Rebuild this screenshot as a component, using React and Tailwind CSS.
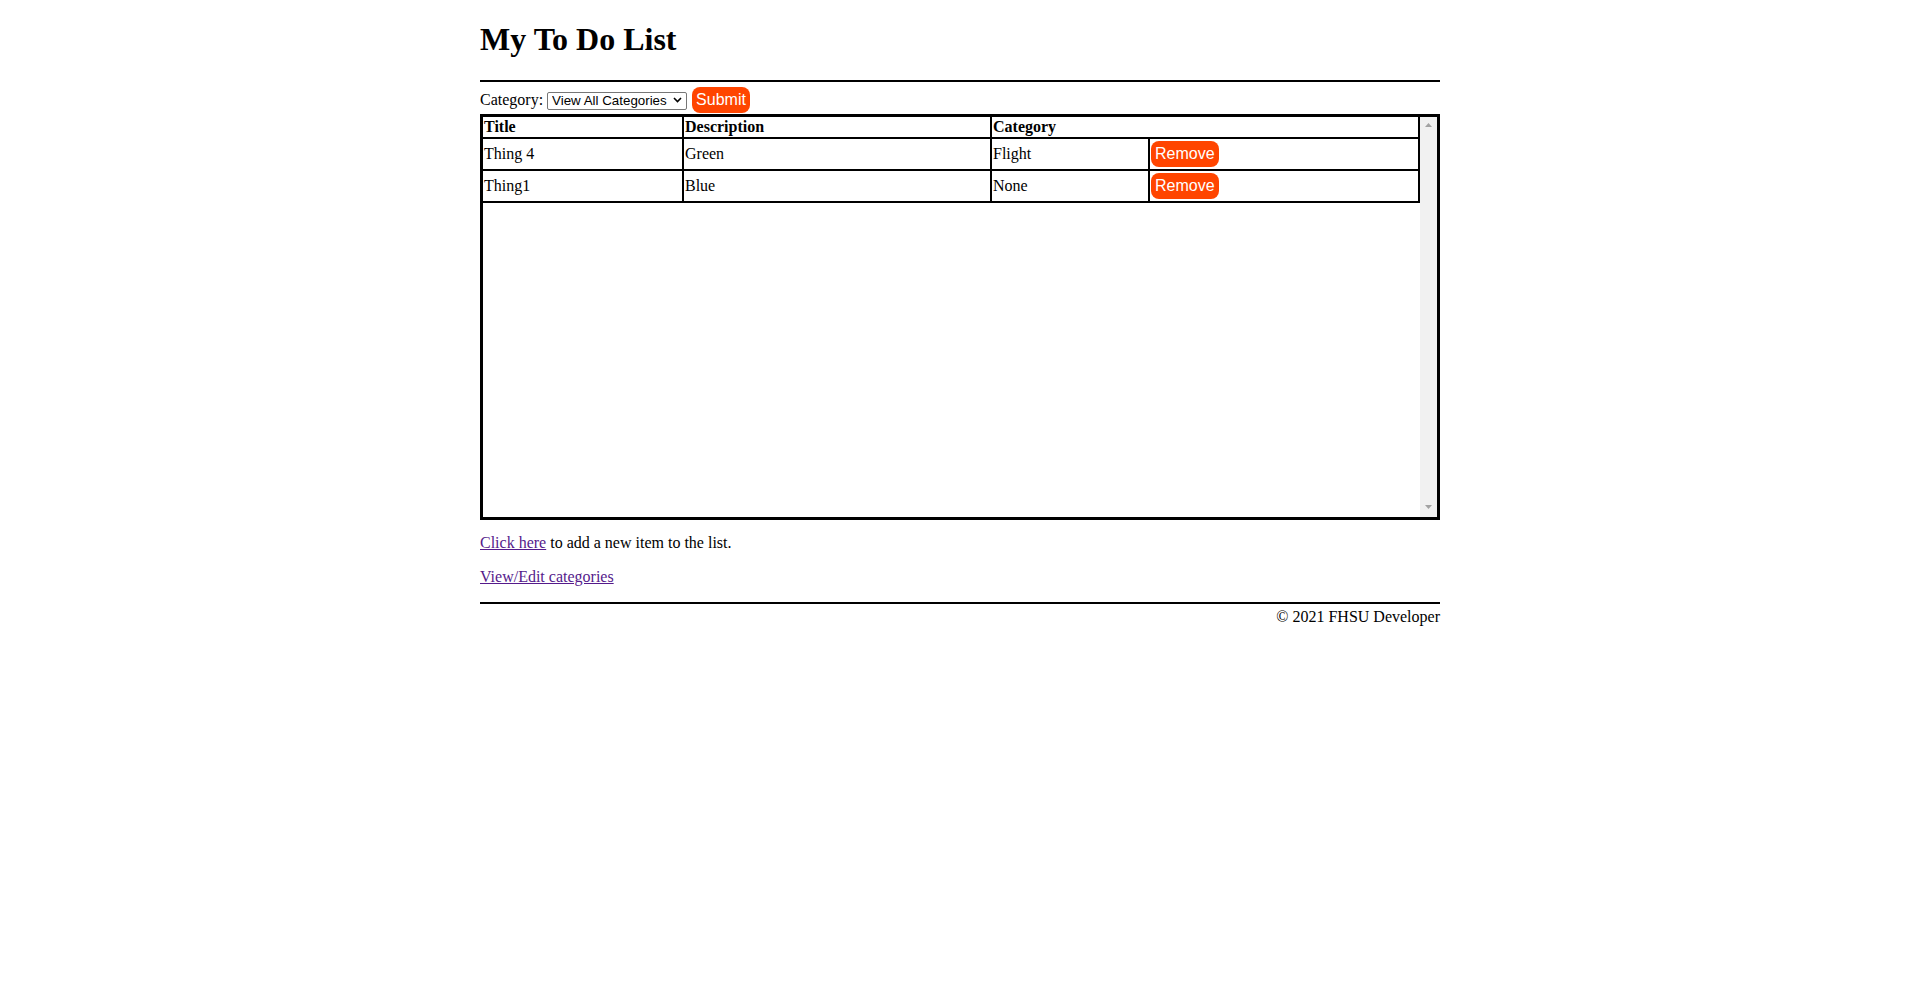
import React, { useState } from 'react';

const initialItems = [
  { id: 4, title: 'Thing 4', description: 'Green', category: 'Flight' },
  { id: 1, title: 'Thing1', description: 'Blue', category: 'None' },
];

function Chevron() {
  return (
    <svg width="9" height="6" viewBox="0 0 9 6" className="pointer-events-none absolute right-[5px] top-[6px]">
      <path d="M1 1l3.5 3.5L8 1" fill="none" stroke="#000" strokeWidth="1.6" />
    </svg>
  );
}

export default function App() {
  const [items, setItems] = useState(initialItems);
  const [category, setCategory] = useState('all');

  const handleRemove = (id) => {
    setItems((prev) => prev.filter((item) => item.id !== id));
  };

  return (
    <div className="min-h-screen bg-white text-black font-['Liberation_Serif','Times_New_Roman',serif] text-[16px] leading-[normal]">
      <div className="w-[960px] mx-auto">
        <h1 className="pt-[21px] text-[32px] leading-[37px] font-bold">My To Do List</h1>
        <hr className="mt-[22px] h-0 border-0 border-t-2 border-black" />

        <form className="mt-[5px] h-[26px] flex items-center" onSubmit={(e) => e.preventDefault()}>
          <span>Category:</span>
          <span className="relative ml-[4px] inline-block">
            <select
              value={category}
              onChange={(e) => setCategory(e.target.value)}
              className="appearance-none w-[140px] h-[18px] border border-[#767676] rounded-[2px] bg-white pl-[4px] pr-[16px] font-['Liberation_Sans',Arial,sans-serif] text-[13.33px] leading-[16px]"
            >
              <option value="all">View All Categories</option>
              <option value="flight">Flight</option>
              <option value="none">None</option>
            </select>
            <Chevron />
          </span>
          <button
            type="submit"
            className="ml-[5px] bg-[#ff4500] text-white rounded-[8px] px-[4px] py-[4px] font-['Liberation_Sans',Arial,sans-serif] text-[16px] leading-[normal]"
          >
            Submit
          </button>
        </form>

        <div className="mt-[1px] h-[406px] border-[3px] border-black flex overflow-hidden">
          <div className="flex-1 min-w-0">
            <table className="w-full table-fixed border-separate border-spacing-0 border-r border-b border-black">
              <colgroup>
                <col className="w-[200px]" />
                <col className="w-[308px]" />
                <col className="w-[158px]" />
                <col />
              </colgroup>
              <thead>
                <tr>
                  <th className="border border-black border-t-0 border-l-0 p-[1px] text-left font-bold">Title</th>
                  <th className="border border-black border-t-0 p-[1px] text-left font-bold">Description</th>
                  <th colSpan={2} className="border border-black border-t-0 p-[1px] text-left font-bold">Category</th>
                </tr>
              </thead>
              <tbody>
                {items.map((item) => (
                  <tr key={item.id} className="h-[32px]">
                    <td className="border border-black border-l-0 p-[1px]">{item.title}</td>
                    <td className="border border-black p-[1px]">{item.description}</td>
                    <td className="border border-black p-[1px]">{item.category}</td>
                    <td className="border border-black p-[1px]">
                      <button
                        onClick={() => handleRemove(item.id)}
                        className="align-middle bg-[#ff4500] text-white rounded-[8px] px-[4px] py-[4px] font-['Liberation_Sans',Arial,sans-serif] text-[16px] leading-[normal]"
                      >
                        Remove
                      </button>
                    </td>
                  </tr>
                ))}
              </tbody>
            </table>
          </div>
          {/* fake classic scrollbar */}
          <div className="w-[17px] bg-[#f1f1f1] flex flex-col items-center justify-between pt-[6px] pb-[8px]">
            <svg width="7" height="4" viewBox="0 0 7 4">
              <path d="M0 4L3.5 0L7 4Z" fill="#a3a3a3" />
            </svg>
            <svg width="7" height="4" viewBox="0 0 7 4">
              <path d="M0 0L3.5 4L7 0Z" fill="#a3a3a3" />
            </svg>
          </div>
        </div>

        <p className="mt-[14px]">
          <a href="#" className="text-[#551a8b] underline">Click here</a> to add a new item to the list.
        </p>
        <p className="mt-[16px]">
          <a href="#" className="text-[#551a8b] underline">View/Edit categories</a>
        </p>
        <hr className="mt-[16px] h-0 border-0 border-t-2 border-black" />
        <footer className="mt-[4px] text-right">© 2021 FHSU Developer</footer>
      </div>
    </div>
  );
}
